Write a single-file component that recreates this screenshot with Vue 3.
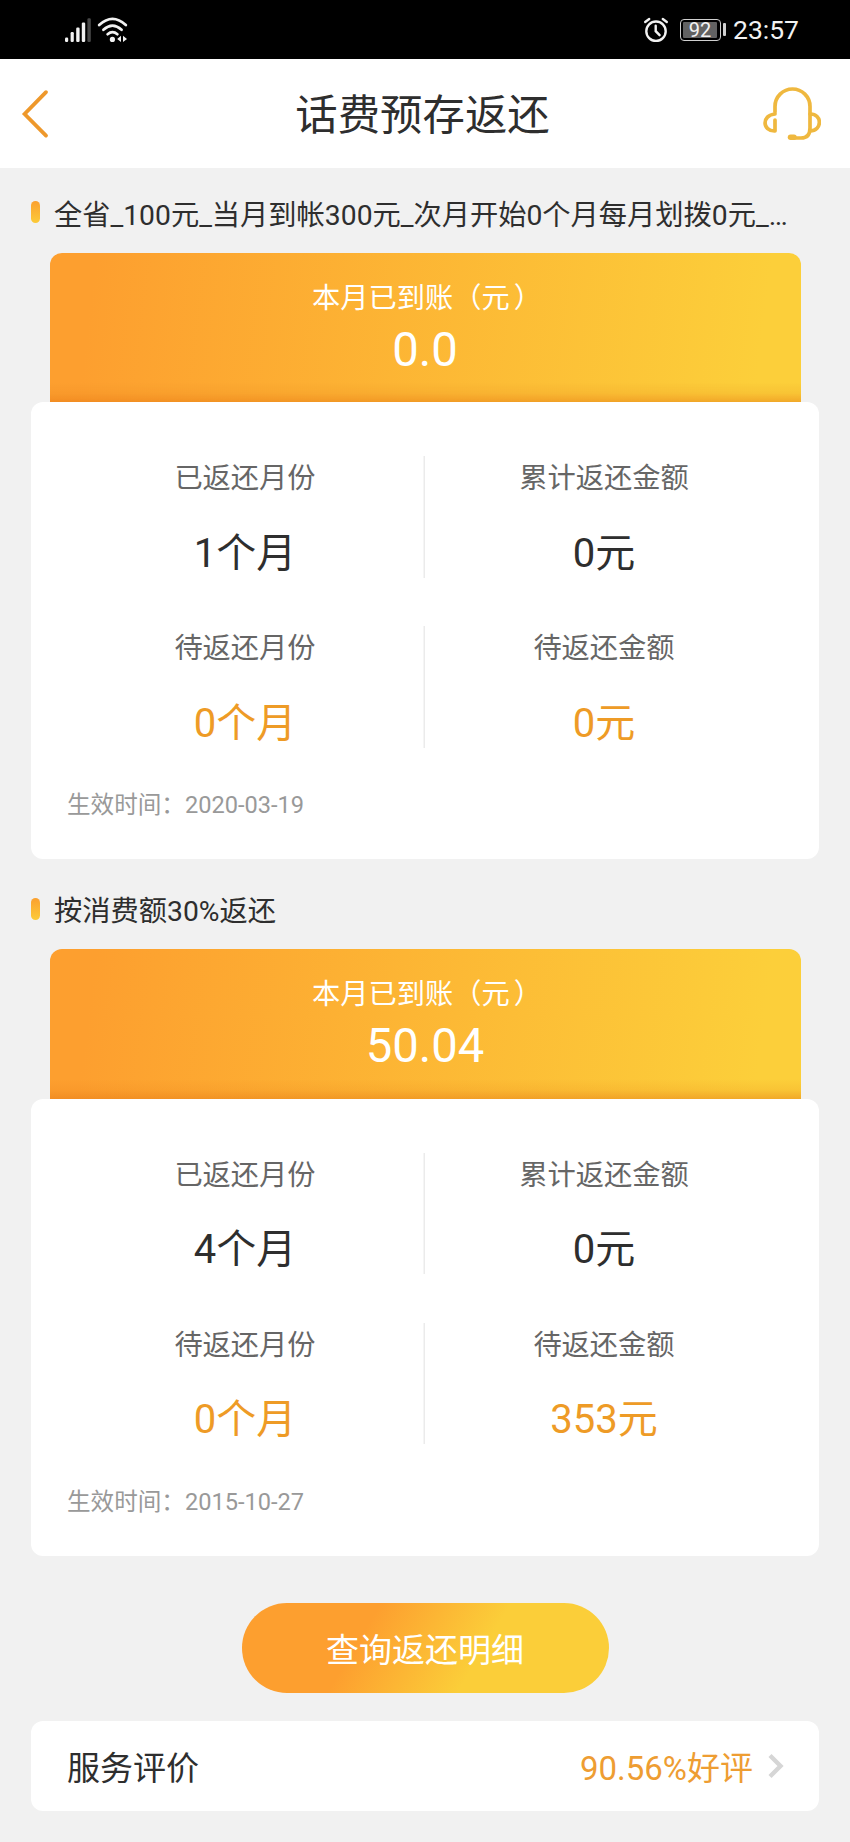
<script setup>
const plans = [
  {
    title: '全省_100元_当月到帐300元_次月开始0个月每月划拨0元_…',
    arrived: '0.0',
    rows: [
      [{ label: '已返还月份', value: '1个月' }, { label: '累计返还金额', value: '0元' }],
      [{ label: '待返还月份', value: '0个月' }, { label: '待返还金额', value: '0元' }],
    ],
    date: '2020-03-19',
  },
  {
    title: '按消费额30%返还',
    arrived: '50.04',
    rows: [
      [{ label: '已返还月份', value: '4个月' }, { label: '累计返还金额', value: '0元' }],
      [{ label: '待返还月份', value: '0个月' }, { label: '待返还金额', value: '353元' }],
    ],
    date: '2015-10-27',
  },
]
</script>

<template>
  <div class="page">
    <div class="status">
      <svg class="signal" width="28" height="26" viewBox="0 0 28 26" fill="#f2f2f2">
        <rect x="1" y="20.5" width="3.2" height="4.5" rx="1.2" />
        <rect x="6.6" y="15" width="3.2" height="10" rx="1.2" />
        <rect x="12.2" y="10.5" width="3.4" height="14.5" rx="1.2" />
        <rect x="17.8" y="5.5" width="3.4" height="19.5" rx="1.2" />
        <rect x="23.4" y="1.2" width="3.4" height="23.8" rx="1.2" fill="#484848" />
      </svg>
      <svg class="wifi" width="32" height="26" viewBox="0 0 32 26" fill="none" stroke="#f2f2f2" stroke-width="2.7" stroke-linecap="round">
        <path d="M2.2 8 Q15.5 -4.2 28.8 8" />
        <path d="M6.4 12.8 Q15.5 4.6 24.6 12.8" />
        <path d="M10.6 17.2 Q15.5 13 20.4 17.2" />
        <circle cx="15.4" cy="22.4" r="2.6" fill="#f2f2f2" stroke="none" />
        <path d="M24 18.8V25L20.2 22ZM26 18.8V25L30 22Z" fill="#f2f2f2" stroke="none" />
      </svg>
      <svg class="alarm" width="26" height="26" viewBox="0 0 26 26" fill="none" stroke="#f2f2f2" stroke-width="2.4" stroke-linecap="round">
        <circle cx="13" cy="14.2" r="9.7" />
        <path d="M12.7 8.8V14.2L16.6 18.2M2.2 5L6.2 2M19.8 2L23.8 5" />
      </svg>
      <div class="battery"><span class="level">92</span></div>
      <i class="nub"></i>
      <span class="clock">23:57</span>
    </div>

    <header class="header">
      <svg class="back" width="30" height="52" viewBox="0 0 30 52" fill="none" stroke="#ee982b" stroke-width="3.8" stroke-linecap="round" stroke-linejoin="miter">
        <path d="M26 4.2L4.6 26L26 47.6" />
      </svg>
      <h1 class="heading">话费预存返还</h1>
      <svg class="service" width="60" height="56" viewBox="0 0 60 56" fill="none" stroke="#efb83f" stroke-width="3.7" stroke-linecap="round" stroke-linejoin="round">
        <path d="M14 27V21.5A17.5 17.5 0 0 1 49 21.5V43Q49 53 40 53H32" />
        <path d="M14 29C0.5 30 1 46.500 14 46V35" />
        <path d="M49 29C61.500 28.500 61.500 46 49 46" />
        <path d="M29.500 52.2H33" stroke-width="5.5" />
      </svg>
    </header>

    <main class="content">
      <section v-for="plan in plans" :key="plan.title" class="plan">
        <h2 class="plan-title"><i class="bullet"></i><span>{{ plan.title }}</span></h2>
        <div class="banner">
          <div class="banner-label">本月已到账（元<span class="close">）</span></div>
          <div class="banner-value">{{ plan.arrived }}</div>
        </div>
        <div class="card">
          <div v-for="(row, i) in plan.rows" :key="i" class="row" :class="{ pending: i === 1 }">
            <div v-for="cell in row" :key="cell.label" class="cell">
              <div class="label">{{ cell.label }}</div>
              <div class="value">{{ cell.value }}</div>
            </div>
          </div>
          <div class="date">生效时间：{{ plan.date }}</div>
        </div>
      </section>

      <button class="query">查询返还明细</button>

      <div class="rating">
        <span>服务评价</span>
        <span class="score">90.56%好评</span>
        <svg class="arrow" width="18" height="26" viewBox="0 0 18 26" fill="none" stroke="#d6d6d6" stroke-width="4.4">
          <path d="M3 2.500L13.500 13L3 23.500" />
        </svg>
      </div>
    </main>
  </div>
</template>

<style>
body {
  margin: 0;
  background: #f1f1f1;
}
</style>

<style scoped>
.page {
  width: 850px;
  height: 1842px;
  overflow: hidden;
  background: #f1f1f1;
  color: #2e2e2e;
  font-family: Roboto, "Noto Sans CJK SC", sans-serif;
}
.status {
  box-sizing: border-box;
  display: flex;
  align-items: center;
  height: 59px;
  padding: 0 51px 0 64px;
  background: #000;
  color: #f2f2f2;
}
.wifi {
  margin-left: 5px;
}
.alarm {
  margin-left: auto;
}
.battery {
  box-sizing: border-box;
  width: 41px;
  height: 22px;
  margin-left: 11px;
  padding: 2px;
  border: 1.5px solid #d0d0d0;
  border-radius: 4px;
}
.level {
  display: block;
  width: 34px;
  height: 16px;
  border-radius: 1px;
  background: #626262;
  font-size: 20px;
  line-height: 17px;
  text-align: center;
}
.nub {
  width: 3px;
  height: 13px;
  margin: 0 7px 0 2px;
  border-radius: 1px;
  background: #d0d0d0;
}
.clock {
  font-size: 26.5px;
  line-height: 32px;
  margin-top: 1px;
}
.header {
  box-sizing: border-box;
  display: flex;
  align-items: center;
  justify-content: space-between;
  height: 109px;
  padding: 0 29px 0 20px;
  background: #fff;
}
.back {
  margin-right: 34px;
}
.heading {
  margin: 5px 0 0 0;
  font-size: 42.4px;
  line-height: 60px;
  font-weight: 400;
}
.service {
  margin-bottom: 1px;
}
.content {
  padding: 7.5px 31px 0;
}
.plan {
  margin-bottom: 13.2px;
}
.plan-title {
  box-sizing: border-box;
  display: flex;
  align-items: center;
  gap: 14px;
  height: 77px;
  margin: 0;
  padding-bottom: 4px;
  font-size: 28.25px;
  font-weight: 400;
  white-space: nowrap;
}
.bullet {
  flex: none;
  width: 9px;
  height: 22px;
  border-radius: 4.5px;
  background: linear-gradient(#fba02f, #fccb39);
}
.banner {
  box-sizing: border-box;
  height: 149.5px;
  margin: 0 18.5px;
  padding-top: 25px;
  border-radius: 12px 12px 0 0;
  background:
    linear-gradient(to top, rgba(226, 116, 16, 0.42), rgba(226, 116, 16, 0.12) 9px, rgba(226, 116, 16, 0) 20px),
    linear-gradient(97deg, #fd9f2f 6%, #fccf3a 94%);
  color: #fff;
  text-align: center;
}
.banner-label {
  font-size: 28.25px;
  line-height: 42px;
}
.close {
  margin: 0 -4px 0 4px;
}
.banner-value {
  font-size: 47.2px;
  line-height: 56px;
  margin-top: 2px;
}
.card {
  box-sizing: border-box;
  height: 457px;
  padding: 54px 36px 0;
  border-radius: 12px;
  background: #fff;
}
.row {
  display: grid;
  grid-template-columns: 1fr 1fr;
  height: 121.5px;
  margin-bottom: 48.5px;
  text-align: center;
}
.cell:first-child {
  padding-right: 2px;
}
.cell + .cell {
  box-shadow: -1.5px 0 0 #ebebeb;
}
.label {
  color: #666;
  font-size: 28.25px;
  line-height: 45px;
}
.value {
  margin-top: 29.5px;
  font-size: 40px;
  line-height: 46px;
}
.pending {
  margin-bottom: 37.5px;
}
.pending .value {
  color: #ee9b26;
}
.date {
  color: #999;
  font-size: 23.6px;
  line-height: 40px;
}
.query {
  display: block;
  width: 367px;
  height: 90px;
  margin: 47.5px auto 28px;
  padding: 0 0 1px;
  border: 0;
  border-radius: 45px;
  background: linear-gradient(121deg, #fd9f2f 33%, #fbce39 64%);
  color: #fff;
  font: inherit;
  font-size: 33px;
}
.rating {
  box-sizing: border-box;
  display: flex;
  align-items: center;
  height: 90px;
  padding: 0 34px 0 36px;
  border-radius: 12px;
  background: #fff;
  font-size: 33px;
}
.score {
  margin-left: auto;
  color: #ee9d32;
}
.arrow {
  margin-left: 14px;
}
</style>
